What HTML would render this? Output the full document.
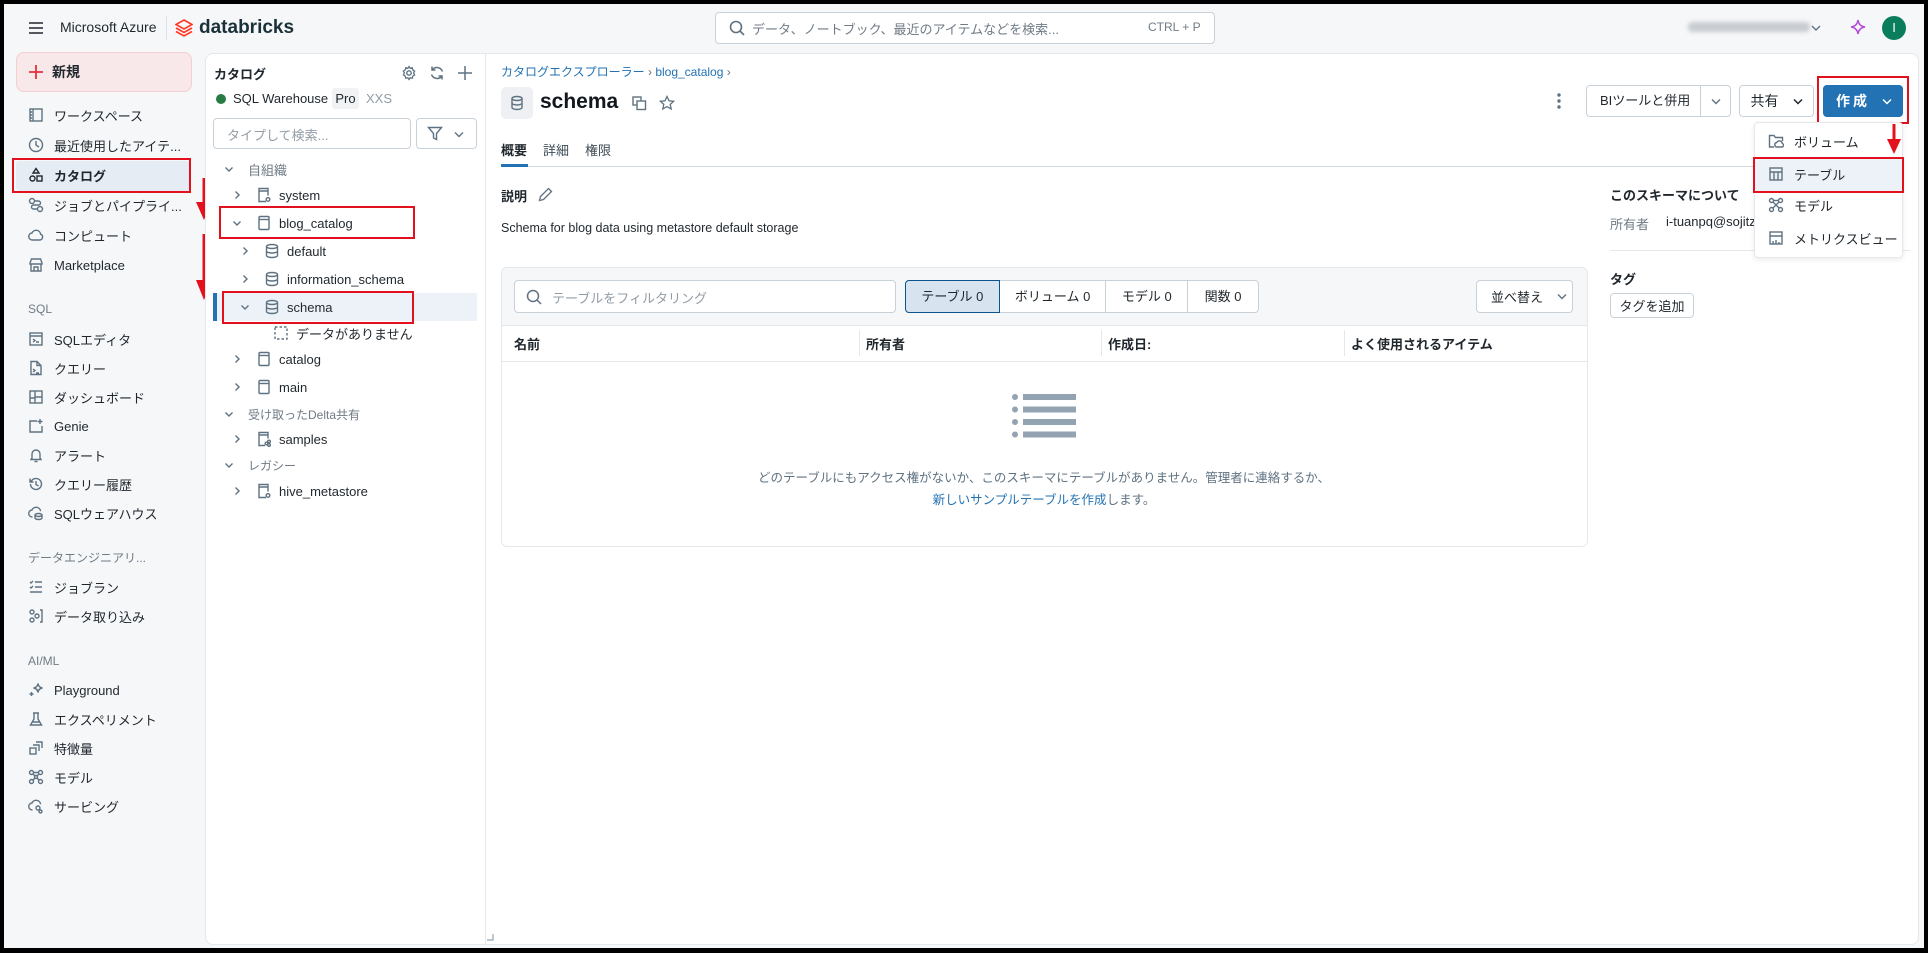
<!DOCTYPE html>
<html><head><meta charset="utf-8">
<style>
*{box-sizing:border-box;margin:0;padding:0}
body{width:1928px;height:953px;background:#000;position:relative;overflow:hidden;font-family:"Liberation Sans","Noto Sans CJK JP",sans-serif;color:#1f272d;font-size:13px}
.a{position:absolute;white-space:nowrap}
#app{position:absolute;left:4px;top:4px;width:1920px;height:944px;background:#f6f7f9}
.panel{position:absolute;background:#fff;border:1px solid #e4e8ec}
.nav{position:absolute;left:28px;font-size:13px;color:#1f272d;display:flex;align-items:center;height:20px}
.nav svg{width:16px;height:16px;margin-right:10px;stroke:#5f7281;fill:none;stroke-width:1.4}
.sec{position:absolute;left:28px;font-size:12px;color:#6f7b86}
.tr{position:absolute;display:flex;align-items:center;height:22px;font-size:13px}
.tr svg{stroke:#5f7281;fill:none;stroke-width:1.4}
.chev{width:10px;height:10px;margin-right:14px}
.ic{width:16px;height:16px;margin-right:7px}
.red{position:absolute;border:2px solid #e3111d}
.btn{position:absolute;border:1px solid #c9d1d8;border-radius:4px;background:#fff;display:flex;align-items:center;justify-content:center;font-size:13px}
.gray{color:#6f7b86}
.mi{position:absolute;left:1756px;width:145px;height:30px;display:flex;align-items:center;padding-left:12px;font-size:13px}
.mi svg{width:16px;height:16px;margin-right:10px;stroke:#5f7281;fill:none;stroke-width:1.4}
</style></head><body>
<div id="app"></div>

<!-- header -->
<svg class="a" style="left:28px;top:21px" width="16" height="14" viewBox="0 0 16 14"><path d="M1 2h14M1 7h14M1 12h14" stroke="#1f272d" stroke-width="1.5"/></svg>
<div class="a" style="left:60px;top:19px;font-size:14px;color:#1f272d">Microsoft Azure</div>
<div class="a" style="left:166px;top:16px;width:1px;height:24px;background:#dde2e6"></div>
<svg class="a" style="left:175px;top:19px" width="18" height="18" viewBox="0 0 18 18"><path d="M9 1L17 5.5 9 10 1 5.5z" fill="none" stroke="#ff3621" stroke-width="1.6"/><path d="M1 9l8 4.5L17 9M1 12.5l8 4.5 8-4.5" fill="none" stroke="#ff3621" stroke-width="1.6"/></svg>
<div class="a" style="left:199px;top:17px;font-size:19px;font-weight:bold;color:#1b3139">databricks</div>
<div class="a" style="left:715px;top:12px;width:500px;height:32px;background:#fff;border:1px solid #c9d1d8;border-radius:4px"></div>
<svg class="a" style="left:729px;top:20px" width="16" height="16" viewBox="0 0 16 16"><circle cx="7" cy="7" r="5.5" fill="none" stroke="#5f7281" stroke-width="1.6"/><path d="M11 11l4 4" stroke="#5f7281" stroke-width="1.6"/></svg>
<div class="a gray" style="left:752px;top:19px;font-size:13px">データ、ノートブック、最近のアイテムなどを検索...</div>
<div class="a gray" style="left:1148px;top:20px;font-size:12px">CTRL + P</div>
<div class="a" style="left:1688px;top:22px;width:122px;height:10px;background:#c7ccd1;border-radius:4px;filter:blur(2px)"></div>
<svg class="a" style="left:1811px;top:24px" width="10" height="8" viewBox="0 0 10 8"><path d="M1 2l4 4 4-4" fill="none" stroke="#5f7281" stroke-width="1.4"/></svg>
<svg class="a" style="left:1850px;top:19px" width="16" height="16" viewBox="0 0 16 16"><path d="M8 1Q8.8 7.2 15 8 8.8 8.8 8 15 7.2 8.8 1 8 7.2 7.2 8 1z" fill="none" stroke="#b44fd8" stroke-width="1.5"/></svg>
<div class="a" style="left:1882px;top:16px;width:24px;height:24px;border-radius:50%;background:#0a7d5c;color:#fff;font-size:13px;text-align:center;line-height:24px">I</div>

<!-- sidebar -->
<div class="a" style="left:16px;top:52px;width:176px;height:40px;background:#f8e8e9;border:1px solid #f2cfd1;border-radius:8px"></div>
<svg class="a" style="left:28px;top:64px" width="16" height="16" viewBox="0 0 16 16"><path d="M8 1v14M1 8h14" stroke="#e3303b" stroke-width="1.8"/></svg>
<div class="a" style="left:52px;top:62px;font-size:14px;font-weight:bold">新規</div>
<div class="a" style="left:16px;top:161px;width:174px;height:30px;background:#e6ecf3;border-radius:4px"></div>
<div class="red" style="left:12px;top:158px;width:179px;height:35px"></div>

<div class="nav" style="top:105px"><svg viewBox="0 0 16 16"><rect x="2" y="2" width="12" height="12"/><path d="M5 2v12M2 5h2M2 8h2M2 11h2"/></svg>ワークスペース</div>
<div class="nav" style="top:135px"><svg viewBox="0 0 16 16"><circle cx="8" cy="8" r="6.5"/><path d="M8 4v4l3 2"/></svg>最近使用したアイテ...</div>
<div class="nav" style="top:165px;font-weight:bold"><svg viewBox="0 0 16 16" style="stroke:#1f272d"><path d="M8 1.5l3 4.5H5z"/><rect x="2" y="9" width="5" height="5" rx="2.5"/><rect x="9" y="9" width="5" height="5"/></svg>カタログ</div>
<div class="nav" style="top:195px"><svg viewBox="0 0 16 16"><circle cx="4" cy="4" r="2.5"/><circle cx="12" cy="12" r="2.5"/><path d="M6.5 4h4a2 2 0 010 4h-5a2 2 0 000 4h4"/></svg>ジョブとパイプライ...</div>
<div class="nav" style="top:225px"><svg viewBox="0 0 16 16"><path d="M4.5 13a3.5 3.5 0 01-.5-7 4.5 4.5 0 018.6 1.2A3 3 0 0112 13z"/></svg>コンピュート</div>
<div class="nav" style="top:255px"><svg viewBox="0 0 16 16"><path d="M2 6l1.5-4h9L14 6v1H2zM3 7v7h10V7M6 14v-4h4v4"/></svg>Marketplace</div>
<div class="sec" style="top:302px">SQL</div>
<div class="nav" style="top:329px"><svg viewBox="0 0 16 16"><rect x="2" y="2" width="12" height="12"/><path d="M2 5h12M5 8l2 1.5L5 11M8 11h3"/></svg>SQLエディタ</div>
<div class="nav" style="top:358px"><svg viewBox="0 0 16 16"><path d="M9 1.5H3v13h10V5.5zM9 1.5v4h4M5 9l2 1.5L5 12M8 13h3"/></svg>クエリー</div>
<div class="nav" style="top:387px"><svg viewBox="0 0 16 16"><rect x="2" y="2" width="12" height="12"/><path d="M7 2v12M7 8h7M2 9h5"/></svg>ダッシュボード</div>
<div class="nav" style="top:416px"><svg viewBox="0 0 16 16"><path d="M9 3H2v11h12V8M12 1v5M9.5 3.5h5"/></svg>Genie</div>
<div class="nav" style="top:445px"><svg viewBox="0 0 16 16"><path d="M4 11V7a4 4 0 018 0v4l1 1.5H3zM6.5 14.5h3"/></svg>アラート</div>
<div class="nav" style="top:474px"><svg viewBox="0 0 16 16"><path d="M2.5 8a5.5 5.5 0 101.6-3.9L2 6M2 2.5V6h3.5M8 5v3.5l2.5 1.5"/></svg>クエリー履歴</div>
<div class="nav" style="top:503px"><svg viewBox="0 0 16 16"><path d="M4.5 12a3.5 3.5 0 01-.5-7 4.5 4.5 0 018.6 1.2"/><ellipse cx="10.5" cy="10" rx="3.5" ry="1.5"/><path d="M7 10v3c0 .8 1.6 1.5 3.5 1.5S14 13.8 14 13v-3"/></svg>SQLウェアハウス</div>
<div class="sec" style="top:549px">データエンジニアリ...</div>
<div class="nav" style="top:577px"><svg viewBox="0 0 16 16"><path d="M2 3l1 1 2-2M2 8l1 1 2-2M7 3h7M7 8h7M2 13h12"/></svg>ジョブラン</div>
<div class="nav" style="top:606px"><svg viewBox="0 0 16 16"><circle cx="4" cy="4" r="2"/><circle cx="4" cy="12" r="2"/><circle cx="9" cy="8" r="2"/><path d="M12 2h2v12h-2"/></svg>データ取り込み</div>
<div class="sec" style="top:654px">AI/ML</div>
<div class="nav" style="top:680px"><svg viewBox="0 0 16 16"><path d="M10 1.5Q10.5 5.5 14.5 6 10.5 6.5 10 10.5 9.5 6.5 5.5 6 9.5 5.5 10 1.5zM3.5 10v4M1.5 12h4"/></svg>Playground</div>
<div class="nav" style="top:709px"><svg viewBox="0 0 16 16"><path d="M5 2h6M6 2v6l-3.5 6h11L10 8V2M4 11h8"/></svg>エクスペリメント</div>
<div class="nav" style="top:738px"><svg viewBox="0 0 16 16"><rect x="2" y="8" width="6" height="6"/><path d="M5 5h6v6M8 2h6v6"/></svg>特徴量</div>
<div class="nav" style="top:767px"><svg viewBox="0 0 16 16"><circle cx="3.5" cy="3.5" r="2"/><circle cx="12.5" cy="3.5" r="2"/><circle cx="3.5" cy="12.5" r="2"/><circle cx="12.5" cy="12.5" r="2"/><circle cx="8" cy="8" r="1.5"/><path d="M5 5l2 2M11 5l-2 2M5 11l2-2M11 11l-2-2M5.5 3.5h5"/></svg>モデル</div>
<div class="nav" style="top:796px"><svg viewBox="0 0 16 16"><path d="M4.5 12a3.5 3.5 0 01-.5-7 4.5 4.5 0 018.6 1.2"/><circle cx="10" cy="10" r="2"/><circle cx="12.5" cy="13.5" r="1.5"/></svg>サービング</div>

<!-- red arrows -->
<svg class="a" style="left:192px;top:176px" width="24" height="132" viewBox="0 0 24 132"><path d="M12 2v30M12 58v52" stroke="#e3111d" stroke-width="3"/><path d="M4 26l8 18 8-18zM4 104l8 20 8-20z" fill="#e3111d"/></svg>

<!-- catalog panel -->
<div class="panel" style="left:205px;top:53px;width:280px;height:892px;border-radius:8px 0 0 8px;border-right:none"></div>
<div class="a" style="left:214px;top:64px;font-size:13px;font-weight:bold">カタログ</div>
<svg class="a" style="left:401px;top:65px" width="16" height="16" viewBox="0 0 16 16"><circle cx="8" cy="8" r="2.2" fill="none" stroke="#5f7281" stroke-width="1.4"/><path d="M8 1.5l1.2 1.8 2.1-.5.5 2.1 1.8 1.2-1 1.9 1 1.9-1.8 1.2-.5 2.1-2.1-.5L8 14.5l-1.2-1.8-2.1.5-.5-2.1-1.8-1.2 1-1.9-1-1.9 1.8-1.2.5-2.1 2.1.5z" fill="none" stroke="#5f7281" stroke-width="1.3"/></svg>
<svg class="a" style="left:429px;top:65px" width="16" height="16" viewBox="0 0 16 16"><path d="M13.5 6.5A6 6 0 003 5M2.5 9.5A6 6 0 0013 11M3 1.5V5h3.5M13 14.5V11H9.5" fill="none" stroke="#5f7281" stroke-width="1.5"/></svg>
<svg class="a" style="left:457px;top:65px" width="16" height="16" viewBox="0 0 16 16"><path d="M8 1v14M1 8h14" stroke="#5f7281" stroke-width="1.5"/></svg>
<div class="a" style="left:216px;top:94px;width:10px;height:10px;border-radius:50%;background:#277c43"></div>
<div class="a" style="left:233px;top:91px;font-size:13px">SQL Warehouse</div>
<div class="a" style="left:332px;top:88px;width:27px;height:21px;background:#f0f2f4;border-radius:3px;font-size:13px;text-align:center;line-height:21px">Pro</div>
<div class="a gray" style="left:366px;top:91px;font-size:13px;color:#929ca5">XXS</div>
<div class="a" style="left:213px;top:118px;width:198px;height:31px;border:1px solid #c9d1d8;border-radius:4px"></div>
<div class="a" style="left:227px;top:125px;font-size:13px;color:#929ca5">タイプして検索...</div>
<div class="a" style="left:416px;top:118px;width:61px;height:31px;border:1px solid #c9d1d8;border-radius:4px"></div>
<svg class="a" style="left:427px;top:126px" width="16" height="15" viewBox="0 0 16 15"><path d="M1.5 1.5h13L9.5 7.5v6l-3-1.5V7.5z" fill="none" stroke="#5f7281" stroke-width="1.4"/></svg>
<svg class="a" style="left:454px;top:131px" width="10" height="7" viewBox="0 0 10 7"><path d="M1 1.5l4 4 4-4" fill="none" stroke="#5f7281" stroke-width="1.4"/></svg>

<div class="a" style="left:213px;top:293px;width:264px;height:28px;background:#edf2f8"></div>
<div class="a" style="left:213px;top:293px;width:4px;height:28px;background:#2272b4"></div>

<div class="tr gray" style="left:224px;top:158px"><svg class="chev" viewBox="0 0 10 10"><path d="M1.5 3.5l3.5 3.5 3.5-3.5"/></svg>自組織</div>
<div class="tr" style="left:232px;top:184px"><svg class="chev" viewBox="0 0 10 10"><path d="M3.5 1.5l3.5 3.5-3.5 3.5"/></svg><svg class="ic" viewBox="0 0 16 16"><path d="M10 14.5H3V1.5h9v7M3 4h9"/><circle cx="12" cy="12.5" r="1.8"/></svg>system</div>
<div class="tr" style="left:232px;top:212px"><svg class="chev" viewBox="0 0 10 10"><path d="M1.5 3.5l3.5 3.5 3.5-3.5"/></svg><svg class="ic" viewBox="0 0 16 16"><rect x="3" y="1.5" width="10" height="13" rx="1"/><path d="M3 4.5h10"/></svg>blog_catalog</div>
<div class="tr" style="left:240px;top:240px"><svg class="chev" viewBox="0 0 10 10"><path d="M3.5 1.5l3.5 3.5-3.5 3.5"/></svg><svg class="ic" viewBox="0 0 16 16"><ellipse cx="8" cy="3.5" rx="5.5" ry="2"/><path d="M2.5 3.5v9c0 1.1 2.5 2 5.5 2s5.5-.9 5.5-2v-9M2.5 8c0 1.1 2.5 2 5.5 2s5.5-.9 5.5-2"/></svg>default</div>
<div class="tr" style="left:240px;top:268px"><svg class="chev" viewBox="0 0 10 10"><path d="M3.5 1.5l3.5 3.5-3.5 3.5"/></svg><svg class="ic" viewBox="0 0 16 16"><ellipse cx="8" cy="3.5" rx="5.5" ry="2"/><path d="M2.5 3.5v9c0 1.1 2.5 2 5.5 2s5.5-.9 5.5-2v-9M2.5 8c0 1.1 2.5 2 5.5 2s5.5-.9 5.5-2"/></svg>information_schema</div>
<div class="tr" style="left:240px;top:296px"><svg class="chev" viewBox="0 0 10 10"><path d="M1.5 3.5l3.5 3.5 3.5-3.5"/></svg><svg class="ic" viewBox="0 0 16 16"><ellipse cx="8" cy="3.5" rx="5.5" ry="2"/><path d="M2.5 3.5v9c0 1.1 2.5 2 5.5 2s5.5-.9 5.5-2v-9M2.5 8c0 1.1 2.5 2 5.5 2s5.5-.9 5.5-2"/></svg>schema</div>
<div class="tr" style="left:273px;top:322px;color:#1f272d"><svg class="ic" viewBox="0 0 16 16" style="stroke-dasharray:2.5 2"><rect x="2" y="2" width="12" height="12"/></svg>データがありません</div>
<div class="tr" style="left:232px;top:348px"><svg class="chev" viewBox="0 0 10 10"><path d="M3.5 1.5l3.5 3.5-3.5 3.5"/></svg><svg class="ic" viewBox="0 0 16 16"><rect x="3" y="1.5" width="10" height="13" rx="1"/><path d="M3 4.5h10"/></svg>catalog</div>
<div class="tr" style="left:232px;top:376px"><svg class="chev" viewBox="0 0 10 10"><path d="M3.5 1.5l3.5 3.5-3.5 3.5"/></svg><svg class="ic" viewBox="0 0 16 16"><rect x="3" y="1.5" width="10" height="13" rx="1"/><path d="M3 4.5h10"/></svg>main</div>
<div class="tr gray" style="left:224px;top:403px;font-size:12px"><svg class="chev" viewBox="0 0 10 10"><path d="M1.5 3.5l3.5 3.5 3.5-3.5"/></svg>受け取ったDelta共有</div>
<div class="tr" style="left:232px;top:428px"><svg class="chev" viewBox="0 0 10 10"><path d="M3.5 1.5l3.5 3.5-3.5 3.5"/></svg><svg class="ic" viewBox="0 0 16 16"><path d="M9 14.5H3V1.5h9v6M3 4h9"/><circle cx="13" cy="10.5" r="1.3"/><circle cx="10.5" cy="12.5" r="1.3"/><circle cx="13" cy="14" r="1.3"/></svg>samples</div>
<div class="tr gray" style="left:224px;top:454px;font-size:12px"><svg class="chev" viewBox="0 0 10 10"><path d="M1.5 3.5l3.5 3.5 3.5-3.5"/></svg>レガシー</div>
<div class="tr" style="left:232px;top:480px"><svg class="chev" viewBox="0 0 10 10"><path d="M3.5 1.5l3.5 3.5-3.5 3.5"/></svg><svg class="ic" viewBox="0 0 16 16"><path d="M10 14.5H3V1.5h9v7M3 4h9"/><circle cx="12" cy="12.5" r="1.8"/></svg>hive_metastore</div>
<div class="red" style="left:219px;top:206px;width:196px;height:33px"></div>
<div class="red" style="left:222px;top:291px;width:192px;height:33px"></div>

<!-- main panel -->
<div class="panel" style="left:485px;top:53px;width:1434px;height:892px;border-radius:0 8px 8px 0"></div>
<div class="a" style="left:501px;top:63px;font-size:12px;color:#2272b4">カタログエクスプローラー <span style="color:#5f7281">›</span> blog_catalog <span style="color:#5f7281">›</span></div>
<div class="a" style="left:501px;top:87px;width:32px;height:32px;background:#eef0f3;border-radius:5px"></div>
<svg class="a" style="left:509px;top:95px" width="16" height="16" viewBox="0 0 16 16"><ellipse cx="8" cy="3.5" rx="5" ry="2" fill="none" stroke="#5f7281" stroke-width="1.4"/><path d="M3 3.5v9c0 1.1 2.2 2 5 2s5-.9 5-2v-9M3 8c0 1.1 2.2 2 5 2s5-.9 5-2" fill="none" stroke="#5f7281" stroke-width="1.4"/></svg>
<div class="a" style="left:540px;top:90px;font-size:21px;font-weight:bold;color:#11171c">schema</div>
<svg class="a" style="left:632px;top:96px" width="15" height="15" viewBox="0 0 15 15"><rect x="1" y="1" width="8" height="8" fill="none" stroke="#5f7281" stroke-width="1.4"/><rect x="5" y="5" width="8.5" height="8.5" fill="#fff" stroke="#5f7281" stroke-width="1.4"/></svg>
<svg class="a" style="left:659px;top:95px" width="16" height="16" viewBox="0 0 16 16"><path d="M8 1.5l2 4.3 4.6.5-3.4 3.1 1 4.6L8 11.6 3.8 14l1-4.6L1.4 6.3 6 5.8z" fill="none" stroke="#5f7281" stroke-width="1.3"/></svg>
<div class="a" style="left:501px;top:140px;font-size:13px;font-weight:bold">概要</div>
<div class="a" style="left:543px;top:140px;font-size:13px;color:#3f4d58">詳細</div>
<div class="a" style="left:585px;top:140px;font-size:13px;color:#3f4d58">権限</div>
<div class="a" style="left:501px;top:166px;width:1400px;height:1px;background:#d1d9e1"></div>
<div class="a" style="left:501px;top:164px;width:27px;height:3px;background:#2272b4"></div>
<div class="a" style="left:501px;top:186px;font-size:13px;font-weight:bold">説明</div>
<svg class="a" style="left:538px;top:187px" width="15" height="15" viewBox="0 0 15 15"><path d="M10.5 1.5l3 3-8 8-4 1 1-4z" fill="none" stroke="#5f7281" stroke-width="1.3"/></svg>
<div class="a" style="left:501px;top:221px;font-size:12.5px">Schema for blog data using metastore default storage</div>

<!-- table card -->
<div class="a" style="left:501px;top:267px;width:1087px;height:280px;border:1px solid #e4e8ec;border-radius:6px;background:#fff;overflow:hidden">
  <div style="position:absolute;left:0;top:0;width:100%;height:58px;background:#f6f7f9;border-bottom:1px solid #e4e8ec"></div>
</div>
<div class="a" style="left:514px;top:280px;width:382px;height:33px;background:#fff;border:1px solid #c9d1d8;border-radius:4px"></div>
<svg class="a" style="left:526px;top:289px" width="16" height="16" viewBox="0 0 16 16"><circle cx="7" cy="7" r="5.5" fill="none" stroke="#5f7281" stroke-width="1.5"/><path d="M11 11l4 4" stroke="#5f7281" stroke-width="1.5"/></svg>
<div class="a" style="left:552px;top:288px;font-size:13px;color:#929ca5">テーブルをフィルタリング</div>
<div class="a" style="left:905px;top:280px;width:354px;height:33px;border:1px solid #c9d1d8;border-radius:4px;background:#fff;display:flex;font-size:13px">
  <div style="width:95px;background:#d7e3ef;border:1px solid #0e538b;border-radius:4px 0 0 4px;text-align:center;line-height:31px;margin:-1px 0 -1px -1px">テーブル 0</div>
  <div style="width:107px;text-align:center;line-height:31px;border-right:1px solid #c9d1d8">ボリューム 0</div>
  <div style="width:82px;text-align:center;line-height:31px;border-right:1px solid #c9d1d8">モデル 0</div>
  <div style="width:70px;text-align:center;line-height:31px">関数 0</div>
</div>
<div class="btn" style="left:1476px;top:280px;width:97px;height:33px;justify-content:flex-start;padding-left:14px">並べ替え<svg style="margin-left:14px" width="10" height="7" viewBox="0 0 10 7"><path d="M1 1.5l4 4 4-4" fill="none" stroke="#5f7281" stroke-width="1.4"/></svg></div>
<div class="a" style="left:514px;top:334px;font-size:13px;font-weight:bold">名前</div>
<div class="a" style="left:859px;top:330px;width:1px;height:26px;background:#e4e8ec"></div>
<div class="a" style="left:866px;top:334px;font-size:13px;font-weight:bold">所有者</div>
<div class="a" style="left:1101px;top:330px;width:1px;height:26px;background:#e4e8ec"></div>
<div class="a" style="left:1108px;top:334px;font-size:13px;font-weight:bold">作成日:</div>
<div class="a" style="left:1344px;top:330px;width:1px;height:26px;background:#e4e8ec"></div>
<div class="a" style="left:1351px;top:334px;font-size:13px;font-weight:bold">よく使用されるアイテム</div>
<div class="a" style="left:502px;top:361px;width:1085px;height:1px;background:#e4e8ec"></div>
<svg class="a" style="left:1011px;top:393px" width="66" height="46" viewBox="0 0 66 46"><g fill="#93a3b1"><circle cx="4" cy="4" r="3"/><circle cx="4" cy="16.5" r="3"/><circle cx="4" cy="29" r="3"/><circle cx="4" cy="41.5" r="3"/><rect x="12" y="1" width="53" height="6"/><rect x="12" y="13.5" width="53" height="6"/><rect x="12" y="26" width="53" height="6"/><rect x="12" y="38.5" width="53" height="6"/></g></svg>
<div class="a" style="left:1044px;top:467px;transform:translateX(-50%);font-size:12.5px;color:#5f7281">どのテーブルにもアクセス権がないか、このスキーマにテーブルがありません。管理者に連絡するか、</div>
<div class="a" style="left:1044px;top:489px;transform:translateX(-50%);font-size:12.5px;color:#2272b4">新しいサンプルテーブルを作成<span style="color:#5f7281">します。</span></div>

<!-- right info -->
<div class="a" style="left:1610px;top:185px;font-size:13px;font-weight:bold">このスキーマについて</div>
<div class="a gray" style="left:1610px;top:214px;font-size:13px">所有者</div>
<div class="a" style="left:1666px;top:214px;font-size:13px;width:88px;overflow:hidden">i-tuanpq@sojitz</div>
<div class="a" style="left:1610px;top:250px;width:300px;height:1px;background:#e4e8ec"></div>
<div class="a" style="left:1610px;top:269px;font-size:13px;font-weight:bold">タグ</div>
<div class="btn" style="left:1610px;top:293px;width:84px;height:25px;font-size:13px">タグを追加</div>

<!-- top buttons -->
<svg class="a" style="left:1555px;top:92px" width="8" height="18" viewBox="0 0 8 18"><circle cx="4" cy="3" r="1.7" fill="#5f7281"/><circle cx="4" cy="9" r="1.7" fill="#5f7281"/><circle cx="4" cy="15" r="1.7" fill="#5f7281"/></svg>
<div class="btn" style="left:1586px;top:85px;width:145px;height:32px;justify-content:flex-start"><span style="padding-left:13px;width:114px;border-right:1px solid #c9d1d8;line-height:30px">BIツールと併用</span><svg style="margin-left:10px" width="10" height="7" viewBox="0 0 10 7"><path d="M1 1.5l4 4 4-4" fill="none" stroke="#5f7281" stroke-width="1.4"/></svg></div>
<div class="btn" style="left:1739px;top:85px;width:75px;height:32px;font-size:14px">共有<svg style="margin-left:14px" width="10" height="7" viewBox="0 0 10 7"><path d="M1 1.5l4 4 4-4" fill="none" stroke="#1f272d" stroke-width="1.5"/></svg></div>
<div class="a" style="left:1823px;top:85px;width:80px;height:32px;background:#2272b4;border-radius:4px;color:#fff;font-size:14px;font-weight:bold;display:flex;align-items:center;padding-left:13px;letter-spacing:3px">作成<svg style="margin-left:12px" width="10" height="7" viewBox="0 0 10 7"><path d="M1 1.5l4 4 4-4" fill="none" stroke="#fff" stroke-width="1.5"/></svg></div>
<div class="red" style="left:1817px;top:76px;width:92px;height:48px"></div>

<!-- dropdown -->
<div class="a" style="left:1754px;top:122px;width:149px;height:136px;background:#fff;border:1px solid #e4e8ec;border-radius:4px;box-shadow:0 2px 6px rgba(0,0,0,.08)"></div>
<div class="a" style="left:1755px;top:158px;width:147px;height:33px;background:#edf2f8"></div>
<div class="mi" style="top:126px"><svg viewBox="0 0 16 16"><path d="M6 14H1.5V2.5h4.5l1.5 2h7V8"/><path d="M8.5 14a2.3 2.3 0 01.2-4.5 3 3 0 015.6 1A1.8 1.8 0 0114 14z"/></svg>ボリューム</div>
<div class="mi" style="top:159px"><svg viewBox="0 0 16 16"><rect x="2" y="2" width="12" height="12"/><path d="M2 6h12M6 6v8M10 6v8"/></svg>テーブル</div>
<div class="mi" style="top:190px"><svg viewBox="0 0 16 16"><circle cx="3.5" cy="3.5" r="2"/><circle cx="12.5" cy="3.5" r="2"/><circle cx="3.5" cy="12.5" r="2"/><circle cx="12.5" cy="12.5" r="2"/><path d="M5 5l6 6M11 5l-6 6M5.5 3.5h5"/></svg>モデル</div>
<div class="mi" style="top:223px"><svg viewBox="0 0 16 16"><rect x="2" y="2" width="12" height="12"/><path d="M2 6h12M5 14v-3M8 14v-4M11 14v-2"/></svg>メトリクスビュー</div>
<div class="red" style="left:1753px;top:157px;width:151px;height:36px"></div>
<svg class="a" style="left:1884px;top:124px" width="20" height="32" viewBox="0 0 20 32"><path d="M10 0v18" stroke="#e3111d" stroke-width="3"/><path d="M3 15l7 15 7-15z" fill="#e3111d"/></svg>

<svg class="a" style="left:486px;top:933px" width="8" height="8" viewBox="0 0 8 8"><path d="M7 1v6H1" fill="none" stroke="#93a3b1" stroke-width="1.2"/></svg>
</body></html>
